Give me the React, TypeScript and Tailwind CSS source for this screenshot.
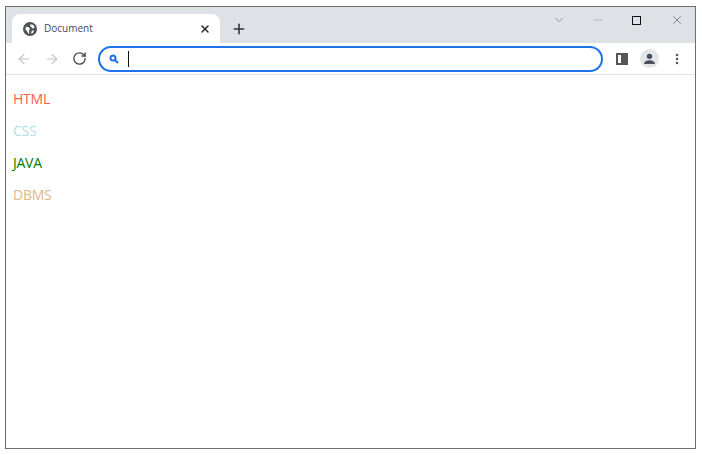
import { ArrowLeft, ArrowRight, RotateCw, Plus, X, Minus, ChevronDown, MoreVertical } from "lucide-react";

const items = [
  { label: "HTML", color: "text-[#ff5c4d]" },
  { label: "CSS", color: "text-[#b0e0e6]" },
  { label: "JAVA", color: "text-[#008000]" },
  { label: "DBMS", color: "text-[#deb887]" },
];

const App = () => {
  return (
    <div className="w-[702px] h-[455px] bg-white pl-[5px] pt-[6px] overflow-hidden font-['Open_Sans',sans-serif]">
      <div className="w-[691px] h-[443px] border border-[#6e6e6e] flex flex-col">
        {/* TAB STRIP */}
        <div className="h-[36px] bg-[#dee1e6] flex items-end pl-[6px] flex-shrink-0">
          <div className="w-[208px] h-[29px] bg-white rounded-t-[8px] flex items-center pl-[11px] pr-[9px]">
            <svg width="14" height="14" viewBox="0 0 24 24" className="flex-shrink-0">
              <circle cx="12" cy="12" r="12" fill="#4f5357" />
              <path d="M5 8l5 1 2 3-2 2 1 3-1 4-3-5-3-3zM13 4l5 1 2 5-4 1-2-3-2-1zM15 15l4-1-2 5-3 1z" fill="#fff" />
            </svg>
            <span className="ml-[7px] text-[10px] text-[#3f4a5a] flex-1">Document</span>
            <X size={12} strokeWidth={2.8} className="text-[#202327]" />
          </div>
          <div className="w-[37px] h-[29px] flex items-center justify-center">
            <Plus size={16} strokeWidth={2.4} className="text-[#33363a]" />
          </div>
          <div className="flex-1 self-start flex items-center h-[26px] pl-[295px] gap-[25px]">
            <ChevronDown size={14} strokeWidth={1} className="text-[#5f6368]" />
            <Minus size={14} strokeWidth={1} className="text-[#9a9da1]" />
            <div className="w-[9px] h-[9px] border border-[#111] ml-[2px]" />
            <X size={14} strokeWidth={1} className="text-[#444] ml-[4px]" />
          </div>
        </div>

        {/* TOOLBAR */}
        <div className="h-[32px] bg-white border-b border-[#e3e4e6] flex items-center flex-shrink-0 pl-[10px]">
          <ArrowLeft size={16} strokeWidth={1.6} className="text-[#bdc1c6]" />
          <ArrowRight size={16} strokeWidth={1.6} className="text-[#bdc1c6] ml-[12px]" />
          <RotateCw size={15} strokeWidth={2.2} className="text-[#4a4e53] ml-[12px]" />
          <div className="ml-[11px] w-[505px] h-[26px] rounded-full border-2 border-[#1a73e8] flex items-center pl-[9px]">
            <svg width="10" height="10" viewBox="0 0 10 10" fill="none" stroke="#1a73e8" className="flex-shrink-0">
              <circle cx="4" cy="4" r="2.5" strokeWidth="2" />
              <path d="M6 6l3 3" strokeWidth="2" />
            </svg>
            <div className="ml-[9px] w-px h-[16px] bg-[#111]" />
          </div>
          <div className="ml-[13px] w-[12px] h-[12px] border-2 border-[#53575c] flex justify-end">
            <div className="w-[5px] bg-[#53575c]" />
          </div>
          <div className="ml-[12px] w-[19px] h-[19px] rounded-full bg-[#e3e5e9] flex items-center justify-center">
            <svg width="13" height="13" viewBox="0 0 24 24" fill="#47505e">
              <circle cx="12" cy="8" r="5" />
              <path d="M2 22c0-5 5-7 10-7s10 2 10 7z" />
            </svg>
          </div>
          <MoreVertical size={14} strokeWidth={2.4} className="text-[#53575c] ml-[11px]" />
        </div>

        {/* PAGE */}
        <ul className="pl-[7px] pt-[8px] flex flex-col text-[14px] tracking-[-0.25px]">
          {items.map((item) => (
            <li key={item.label} className={`h-[32px] leading-[32px] ${item.color}`}>
              {item.label}
            </li>
          ))}
        </ul>
      </div>
    </div>
  );
};

export default App;
